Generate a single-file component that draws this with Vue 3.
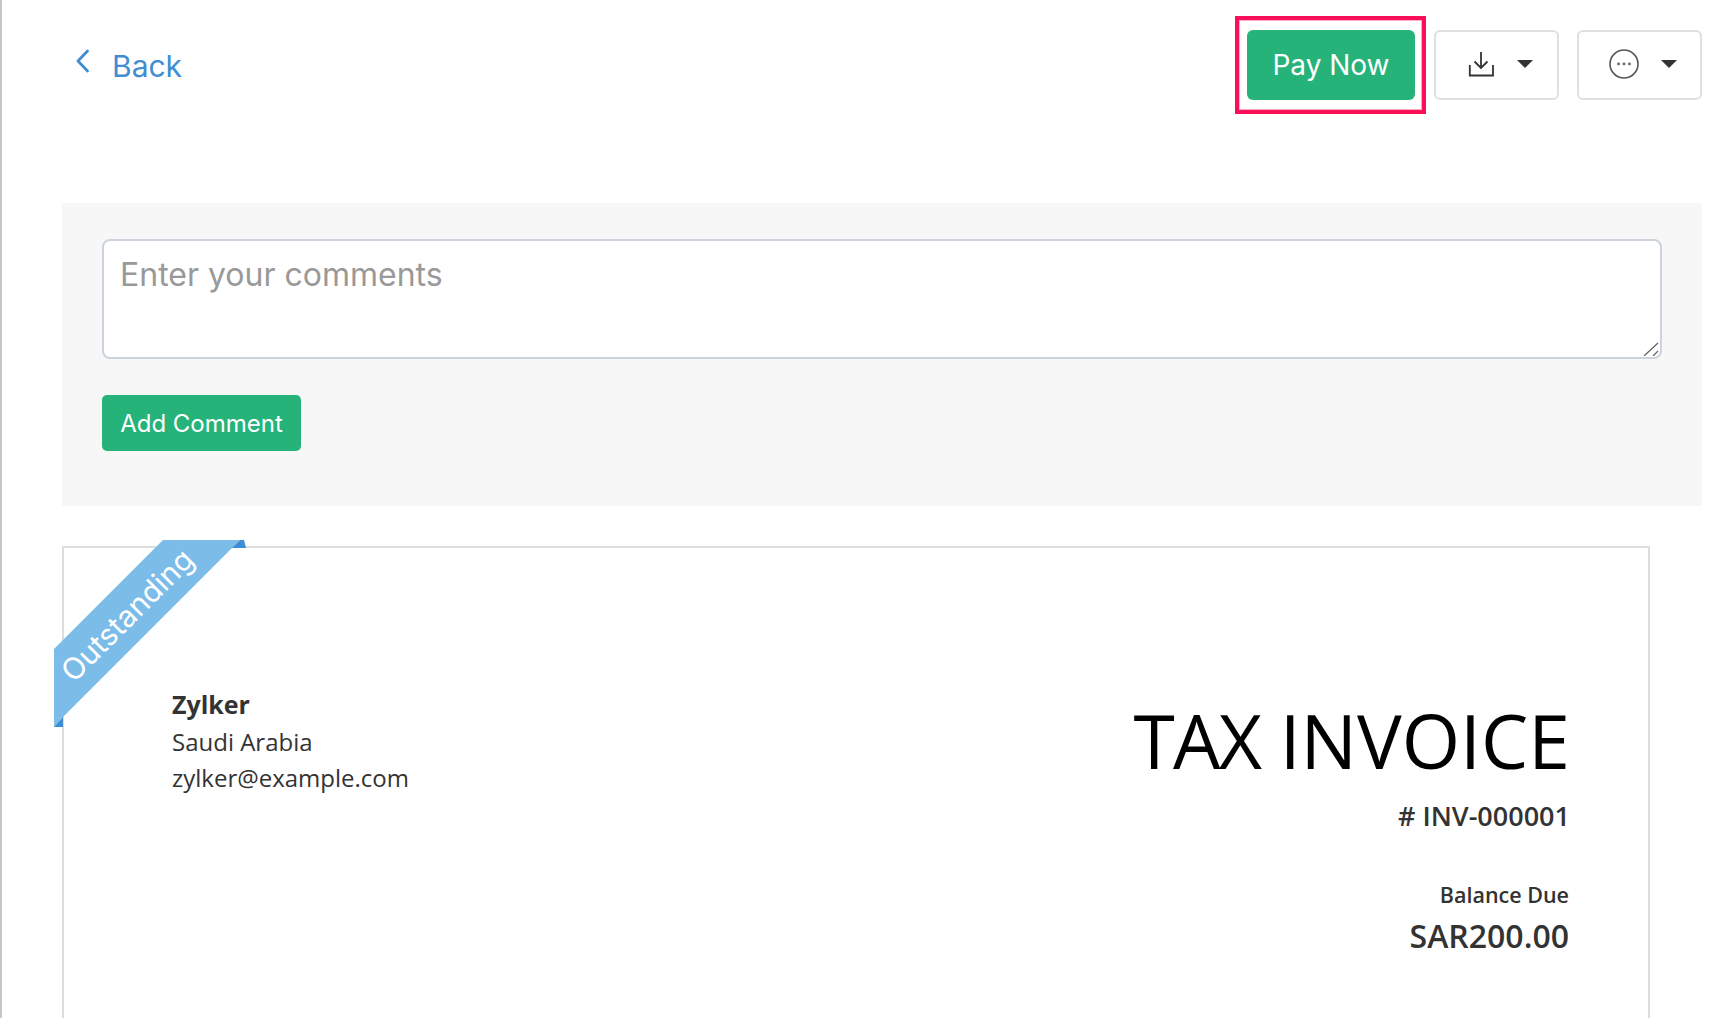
<script setup>
const company = { name: 'Zylker', country: 'Saudi Arabia', email: 'zylker@example.com' }
const invoice = { number: '# INV-000001', label: 'Balance Due', amount: 'SAR200.00' }
</script>

<template>
  <div class="page">
    <header class="topbar">
      <a class="back">
        <svg class="chev" width="16" height="24" viewBox="0 0 16 24" fill="none" stroke="#408dd2" stroke-width="2.800" stroke-linecap="round" stroke-linejoin="round"><path d="M13.500 2 4 12l9.500 10" /></svg>
        <span>Back</span>
      </a>
      <div class="actions">
        <div class="highlight">
          <button class="pay">Pay Now</button>
        </div>
        <button class="tool">
          <svg width="28" height="28" viewBox="0 0 28 28" fill="none" stroke="#333" stroke-width="1.800"><path d="M14 2v16M7.500 11.500l6.500 6.500 6.500-6.500" /><path d="M2.800 15v10.500H26V15" /></svg>
          <i class="caret"></i>
        </button>
        <button class="tool">
          <svg width="30" height="30" viewBox="0 0 30 30" fill="none"><circle cx="15" cy="15" r="14" stroke="#555" stroke-width="1.600" /><circle cx="9.500" cy="15" r="1.400" fill="#666" /><circle cx="15" cy="15" r="1.400" fill="#666" /><circle cx="20.500" cy="15" r="1.400" fill="#666" /></svg>
          <i class="caret"></i>
        </button>
      </div>
    </header>

    <section class="comments">
      <div class="field">
        <textarea class="input" placeholder="Enter your comments"></textarea>
        <svg class="grip" width="16" height="14" viewBox="0 0 16 14" stroke="#666" stroke-width="1.300"><path d="M1 14 15 1M10 14l5-5" /></svg>
      </div>
      <button class="add">Add Comment</button>
    </section>

    <article class="invoice">
      <svg class="ribbon" width="200" height="200" viewBox="0 0 200 200">
        <polygon points="0,109 109,0 186,0 9,177 0,187" fill="#7bbce9" />
        <polygon points="186,0 190,0 192,8 178,8" fill="#3d8ed4" />
        <polygon points="0,187 9,177 9,187" fill="#3d8ed4" />
      </svg>
      <span class="ribbon-text">Outstanding</span>
      <div class="sheet">
        <div class="from">
          <strong>{{ company.name }}</strong>
          <span>{{ company.country }}</span>
          <span>{{ company.email }}</span>
        </div>
        <div class="meta">
          <h1><span class="tax">TAX</span> INVOICE</h1>
          <p class="num">{{ invoice.number }}</p>
          <p class="label">{{ invoice.label }}</p>
          <p class="amount">{{ invoice.amount }}</p>
        </div>
      </div>
    </article>
  </div>
</template>

<style>
html, body { margin: 0; background: #fff; overflow: hidden; }
</style>

<style scoped>
.page {
  box-sizing: border-box;
  width: 1728px;
  height: 1018px;
  overflow: hidden;
  border-left: 2px solid #c8c8c8;
  padding: 0 26px 0 60px;
  font-family: Inter, "Liberation Sans", sans-serif;
  background: #fff;
}
.topbar {
  height: 203px;
  display: flex;
  justify-content: space-between;
  align-items: flex-start;
}
.back {
  display: flex;
  align-items: flex-start;
  gap: 22px;
  margin: 46px 0 0 12px;
  color: #408dd2;
  font-size: 30px;
  line-height: 40px;
}
.chev { margin-top: 3px; }
.actions { display: flex; align-items: flex-start; margin-top: 16px; }
.highlight {
  box-sizing: border-box;
  width: 191px;
  height: 98px;
  border: 4px solid #fb0f58;
  box-shadow: inset 0 0 0 1px rgba(251, 15, 88, 0.35);
  padding: 10px 0 0 8px;
  margin-right: 8px;
}
.pay {
  width: 168px;
  height: 70px;
  border: 0;
  border-radius: 6px;
  background: #25b37a;
  color: #fff;
  font: 400 28px Inter, sans-serif;
}
.tool {
  box-sizing: border-box;
  width: 125px;
  height: 70px;
  margin-top: 14px;
  margin-left: 18px;
  border: 2px solid #e0e0e0;
  border-radius: 6px;
  background: #fff;
  display: flex;
  align-items: center;
  justify-content: center;
  gap: 22px;
  padding: 0 0 2px 7px;
}
.highlight + .tool { margin-left: 0; }
.caret {
  width: 0;
  height: 0;
  border-left: 8px solid transparent;
  border-right: 8px solid transparent;
  border-top: 8px solid #333;
}
.comments {
  box-sizing: border-box;
  height: 303px;
  background: #f7f7f7;
  padding: 36px 40px 0;
}
.field { position: relative; }
.input {
  display: block;
  box-sizing: border-box;
  width: 100%;
  height: 120px;
  border: 2px solid #ccd3dc;
  border-radius: 8px;
  padding: 14px 16px;
  background: #fff;
  font: 400 32px/40px Inter, sans-serif;
  outline: none;
  resize: none;
}
.input::placeholder { color: #999; }
.grip { position: absolute; right: 3px; bottom: 3px; }
.add {
  display: block;
  margin-top: 36px;
  width: 199px;
  height: 56px;
  border: 0;
  border-radius: 5px;
  background: #25b37a;
  color: #fff;
  font: 400 24px Inter, sans-serif;
  padding: 0;
}
.invoice {
  position: relative;
  box-sizing: border-box;
  width: 1588px;
  height: 520px;
  margin-top: 40px;
  border: 2px solid #ddd;
  font-family: "Open Sans", sans-serif;
  color: #333;
}
.ribbon { position: absolute; left: -10px; top: -8px; }
.ribbon-text {
  position: absolute;
  left: -47px;
  top: 47px;
  width: 220px;
  text-align: center;
  transform: rotate(-45deg);
  color: #fff;
  font: 400 30px/40px Inter, sans-serif;
}
.sheet {
  display: flex;
  justify-content: space-between;
  padding: 137px 78px 0 108px;
}
.from { display: flex; flex-direction: column; font-size: 24px; line-height: 36px; }
.from strong { font-size: 25px; font-weight: 700; line-height: 39px; }
.meta { text-align: right; margin-top: 5px; }
.meta h1 { margin: 0; font-size: 75px; line-height: 100px; font-weight: 400; color: #000; }
.tax { letter-spacing: -1.800px; }
.meta p { margin: 0; }
.meta .num { font-size: 27px; font-weight: 600; line-height: 40px; margin-top: 6px; }
.meta .label { font-size: 21.500px; font-weight: 600; line-height: 30px; margin: 44px 1px 0 0; }
.meta .amount { font-size: 32px; font-weight: 600; line-height: 50px; margin: 1px 1px 0 0; }
</style>
